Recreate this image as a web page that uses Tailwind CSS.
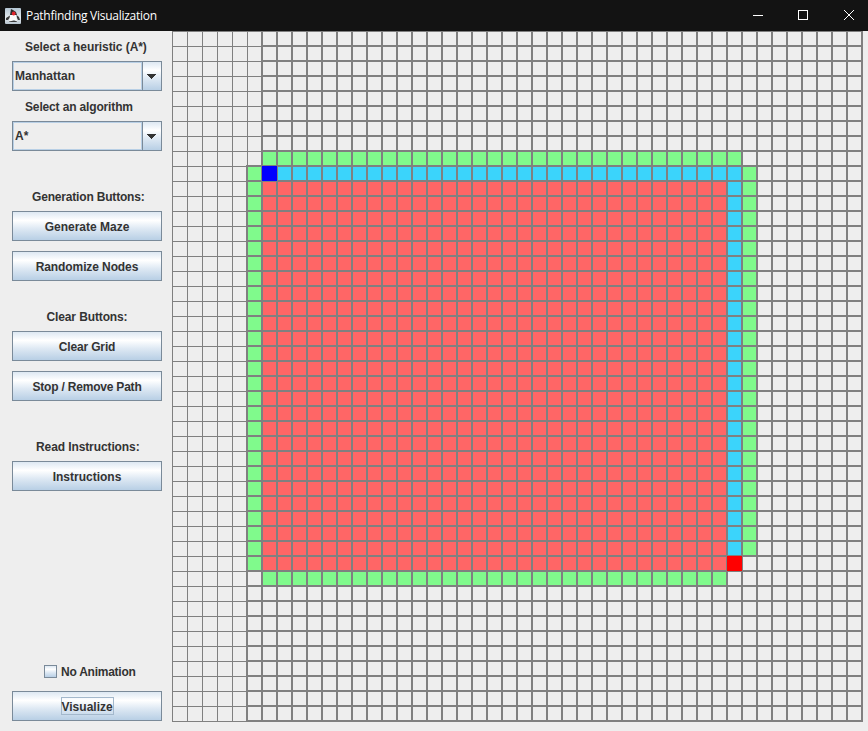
<!DOCTYPE html>
<html lang="en">
<head>
<meta charset="utf-8">
<title>Pathfinding Visualization</title>
<script src="https://cdn.jsdelivr.net/npm/@tailwindcss/browser@4"></script>
</head>
<body class="w-[868px] h-[731px] overflow-hidden bg-[#eeeeee] text-[#333333] flex flex-col font-['Liberation_Sans',sans-serif] text-[12px] font-bold">
<header class="h-[31px] shrink-0 bg-[#131313] text-white flex items-center font-['Open_Sans',sans-serif] font-normal">
  <svg class="ml-[5px] shrink-0" width="16" height="16" viewBox="0 0 16 16">
    <defs><linearGradient id="ic" x1="0" y1="0" x2="0" y2="1"><stop offset="0" stop-color="#b4c6d4"/><stop offset=".6" stop-color="#e4eaee"/><stop offset="1" stop-color="#b9c6d0"/></linearGradient></defs>
    <rect width="16" height="16" rx="1" fill="url(#ic)"/>
    <path d="M6 1L8 2L11 4L12 7L5 7Z" fill="#2b2b2b"/>
    <path d="M5 7L11 7L12 13L9 12L4 14Z" fill="#fafafa"/>
    <path d="M1 10L5 7.5L4.500 10L3 12L1 12ZM11.500 7L14 9L15 12L13 12L12 10ZM4 13.500L9 12.500L12 13.500V14H4Z" fill="#3a3a3a"/>
    <circle cx="8.7" cy="5.5" r="1.9" fill="#e0242c"/>
  </svg>
  <span class="ml-[5px] text-[12px] leading-[16px] w-[140px] whitespace-nowrap tracking-[-0.27px]">Pathfinding Visualization</span>
  <svg class="ml-auto" width="140" height="31" viewBox="0 0 140 31" fill="none" stroke="white" shape-rendering="crispEdges">
    <path d="M25 15.5H35"/><rect x="70.5" y="10.5" width="9" height="9" rx="1"/>
    <path d="M116 10L126 20M126 10L116 20" shape-rendering="auto"/>
  </svg>
</header>
<main class="flex flex-1 min-h-0">
  <aside class="w-[172px] pl-3 flex flex-col">
    <div class="h-[30px] pl-[13px] leading-[33px] tracking-[-0.07px]">Select a heuristic (A*)</div>
    <div class="h-[30px] w-[150px] border border-[#7a8a99] flex">
      <div class="flex-1 border border-[#b8cfe5] pl-px leading-[27px]">Manhattan</div>
      <div class="w-[19px] pr-px pt-px border-l border-[#7a8a99] bg-linear-[to_bottom,#dde8f3_0%,#ffffff_30%,#dde8f3_60%,#b8cfe5_100%] flex items-center justify-center"><svg class="mr-px" width="10" height="5" shape-rendering="crispEdges"><path d="M0 0H10L5 5Z" fill="#333"/></svg></div>
    </div>
    <div class="h-[30px] pl-[13px] leading-[33px] tracking-[-0.15px]">Select an algorithm</div>
    <div class="h-[30px] w-[150px] border border-[#7a8a99] flex">
      <div class="flex-1 border border-[#b8cfe5] pl-px leading-[27px]">A*</div>
      <div class="w-[19px] pr-px pt-px border-l border-[#7a8a99] bg-linear-[to_bottom,#dde8f3_0%,#ffffff_30%,#dde8f3_60%,#b8cfe5_100%] flex items-center justify-center"><svg class="mr-px" width="10" height="5" shape-rendering="crispEdges"><path d="M0 0H10L5 5Z" fill="#333"/></svg></div>
    </div>
    <div class="mt-[30px] h-[30px] pl-[20px] leading-[33px] tracking-[-0.18px]">Generation Buttons:</div>
    <button class="h-[30px] w-[150px] border border-[#7a8a99] bg-linear-[to_bottom,#dde8f3_0%,#ffffff_30%,#dde8f3_60%,#b8cfe5_100%] leading-[31px]">Generate Maze</button>
    <button class="mt-[10px] h-[30px] w-[150px] border border-[#7a8a99] bg-linear-[to_bottom,#dde8f3_0%,#ffffff_30%,#dde8f3_60%,#b8cfe5_100%] leading-[31px] tracking-[-0.1px]">Randomize Nodes</button>
    <div class="mt-[20px] h-[30px] w-[150px] text-center leading-[33px] tracking-[-0.12px]">Clear Buttons:</div>
    <button class="h-[30px] w-[150px] border border-[#7a8a99] bg-linear-[to_bottom,#dde8f3_0%,#ffffff_30%,#dde8f3_60%,#b8cfe5_100%] leading-[31px] tracking-[-0.15px]">Clear Grid</button>
    <button class="mt-[10px] h-[30px] w-[150px] border border-[#7a8a99] bg-linear-[to_bottom,#dde8f3_0%,#ffffff_30%,#dde8f3_60%,#b8cfe5_100%] leading-[31px] tracking-[-0.2px]">Stop / Remove Path</button>
    <div class="mt-[30px] h-[30px] pl-[24px] leading-[33px] tracking-[-0.1px]">Read Instructions:</div>
    <button class="h-[30px] w-[150px] border border-[#7a8a99] bg-linear-[to_bottom,#dde8f3_0%,#ffffff_30%,#dde8f3_60%,#b8cfe5_100%] leading-[31px]">Instructions</button>
    <label class="mt-auto h-[30px] pl-[32px] flex items-center gap-[4px]"><span class="size-[13px] border border-[#7a8a99] bg-linear-[to_bottom,#dde8f3_0%,#ffffff_30%,#dde8f3_60%,#b8cfe5_100%]"></span><span class="h-[30px] leading-[33px] tracking-[-0.25px]">No Animation</span></label>
    <button class="mt-[5px] mb-[10px] h-[30px] w-[150px] border border-[#7a8a99] bg-linear-[to_bottom,#dde8f3_0%,#ffffff_30%,#dde8f3_60%,#b8cfe5_100%] flex items-center justify-center"><span class="border border-[#a3b8cc] h-[18px] w-[53px] leading-[18px]">Visualize</span></button>
  </aside>
  <svg id="grid" width="691" height="691" viewBox="0 0 691 691" shape-rendering="crispEdges"></svg>
</main>
<script>
const S = 15, N = 46, LINE = '#808080', out = [];
const rect = (x, y, w, h, c) => out.push(`<rect x="${x}" y="${y}" width="${w}" height="${h}" fill="${c}"/>`);
const cells = (c, r, w, h, color) => rect(c * S, r * S, w * S, h * S, color);
cells(6, 8, 32, 1, '#80fa8c');
cells(5, 9, 1, 27, '#80fa8c');
cells(38, 9, 1, 26, '#80fa8c');
cells(6, 36, 31, 1, '#80fa8c');
cells(6, 10, 31, 26, '#ff6666');
cells(6, 9, 32, 1, '#3bd4fb');
cells(37, 10, 1, 25, '#3bd4fb');
for (let i = 0; i <= N; i++) {
  rect(i * S, 0, 1, N * S + 1, LINE);
  rect(0, i * S, N * S + 1, 1, LINE);
  if (i > 5) rect(i * S - 1, 0, 1, N * S + 1, LINE);
  if (i > 0) {
    const from = (i >= 9 ? 5 : 6) * S - 1;
    rect(from, i * S - 1, N * S + 1 - from, 1, LINE);
  }
}
rect(5 * S - 1, 9 * S - 1, 1, 37 * S + 2, LINE);
cells(6, 9, 1, 1, '#0000ff');
cells(37, 35, 1, 1, '#ff0000');
document.getElementById('grid').innerHTML = out.join('');
</script>
</body>
</html>
